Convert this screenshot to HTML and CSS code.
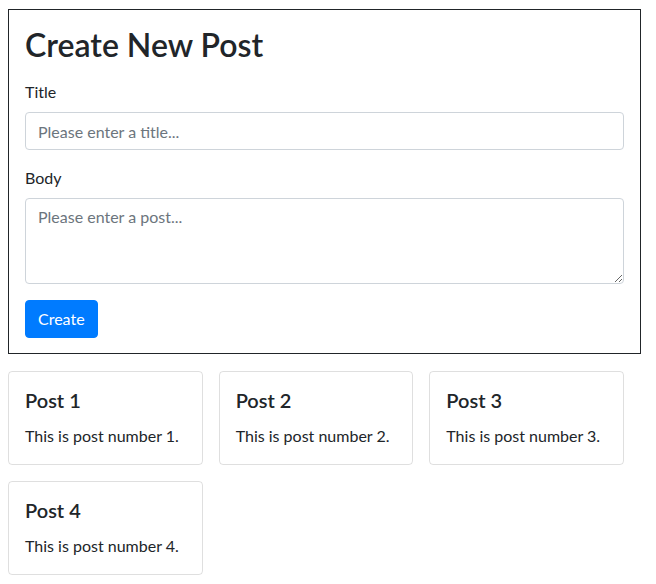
FILE: index.html
```html
<!DOCTYPE html>
<html lang="en">
<head>
<meta charset="utf-8">
<title>Create New Post</title>
<link rel="stylesheet" href="styles.css">
</head>
<body>
<form class="post-form">
  <h2 class="form-title">Create New Post</h2>
  <div class="form-group">
    <label class="form-label" for="title">Title</label>
    <input class="form-control" id="title" type="text" placeholder="Please enter a title...">
  </div>
  <div class="form-group">
    <label class="form-label" for="body">Body</label>
    <textarea class="form-control form-textarea" id="body" rows="3" placeholder="Please enter a post..."></textarea>
  </div>
  <button class="btn-primary" type="button">Create</button>
</form>
<div class="post-grid">
  <div class="card"><h5 class="card-title">Post 1</h5><p class="card-text">This is post number 1.</p></div>
  <div class="card"><h5 class="card-title">Post 2</h5><p class="card-text">This is post number 2.</p></div>
  <div class="card"><h5 class="card-title">Post 3</h5><p class="card-text">This is post number 3.</p></div>
  <div class="card"><h5 class="card-title">Post 4</h5><p class="card-text">This is post number 4.</p></div>
</div>
</body>
</html>
```
FILE: styles.css
```css
* { box-sizing: border-box; }
body {
  margin: 9px 8px 8px;
  font-family: Lato, "Open Sans", sans-serif;
  font-size: 16px;
  line-height: 1.5;
  color: #212529;
  background: #fff;
}
.post-form {
  width: 633px;
  border: 1px solid #212529;
  padding: 16px 16px 15px;
}
.form-title {
  margin: 0 0 16px;
  font-size: 32px;
  font-weight: 600;
  line-height: 1.2;
}
.form-group { margin-bottom: 16px; }
.form-label {
  display: inline-block;
  margin-bottom: 8px;
}
.form-control {
  display: block;
  width: 100%;
  height: 38px;
  padding: 6px 12px;
  font-family: inherit;
  font-size: 16px;
  line-height: 1.5;
  color: #495057;
  background: #fff;
  border: 1px solid #ced4da;
  border-radius: 4px;
  margin: 0;
}
.form-control::placeholder { color: #6c757d; opacity: 1; }
.form-textarea {
  height: 86px;
  resize: vertical;
}
.btn-primary {
  display: block;
  height: 38px;
  padding: 6px 12px;
  font-family: inherit;
  font-size: 16px;
  line-height: 1.5;
  color: #fff;
  background: #007bff;
  border: 1px solid #007bff;
  border-radius: 4px;
}
.post-grid {
  margin-top: 17px;
  display: grid;
  grid-template-columns: repeat(3, 194.67px);
  column-gap: 16px;
  row-gap: 16px;
}
.card {
  border: 1px solid rgba(0, 0, 0, 0.125);
  border-radius: 4px;
  padding: 16px;
}
.card-title {
  margin: 0 0 12px;
  font-size: 20px;
  font-weight: 600;
  line-height: 1.2;
}
.card-text { margin: 0; }
```
